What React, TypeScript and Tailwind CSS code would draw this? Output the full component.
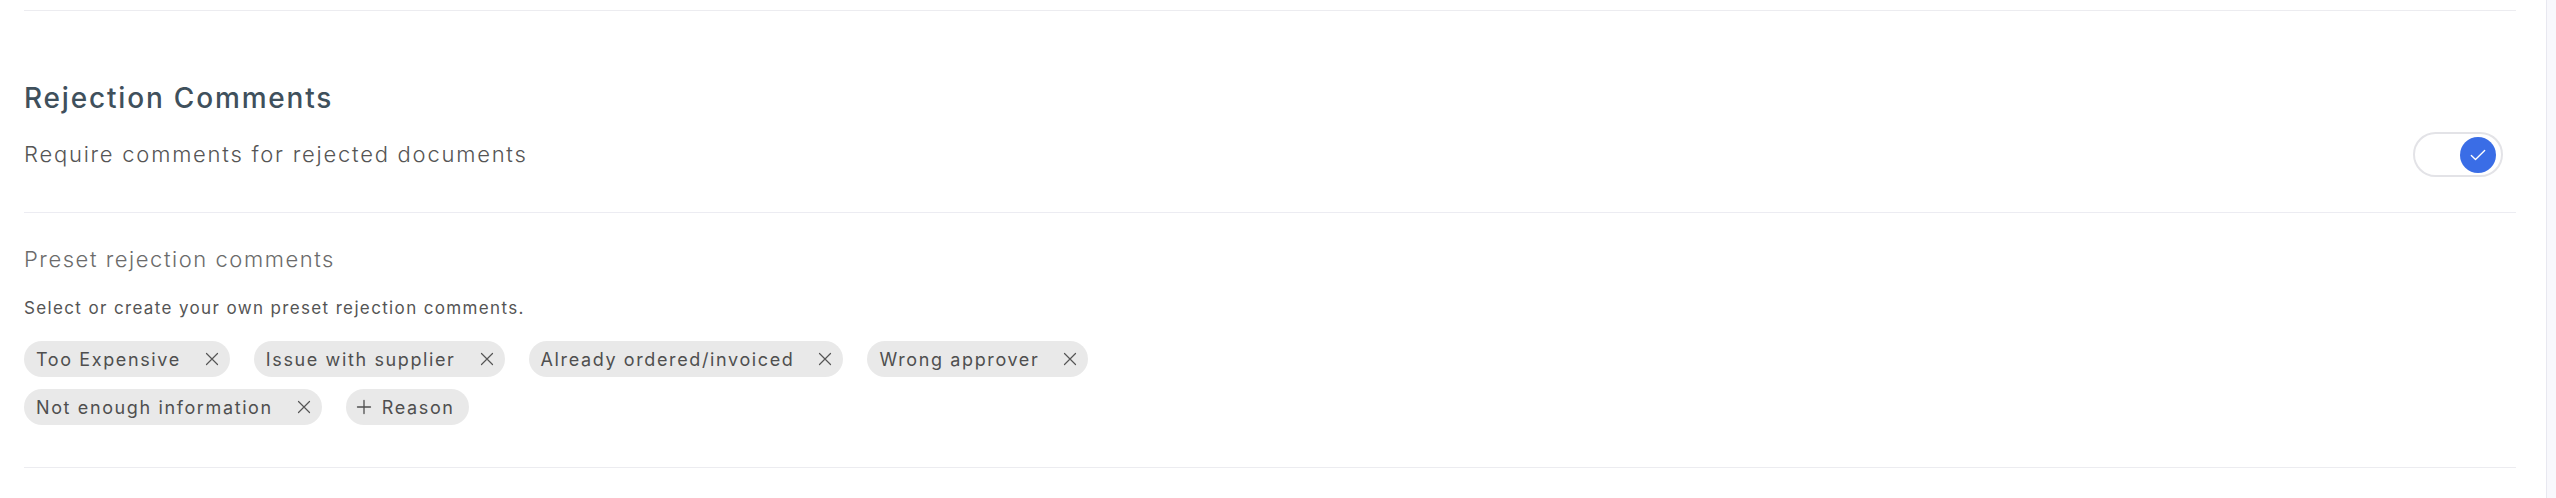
import { useState } from 'react'

const presetComments = [
  'Too Expensive',
  'Issue with supplier',
  'Already ordered/invoiced',
  'Wrong approver',
  'Not enough information',
]

function CloseIcon() {
  return (
    <svg className="w-[14px] h-[14px]" viewBox="0 0 14 14" fill="none" stroke="currentColor">
      <path strokeWidth={1.2} strokeLinecap="round" d="M1.5 1.5l11 11M12.5 1.5l-11 11" />
    </svg>
  )
}

export default function App() {
  const [requireComments, setRequireComments] = useState(true)
  const [comments, setComments] = useState(presetComments)

  return (
    <div className="flex w-full h-[498px] bg-white font-['Inter',sans-serif]">
      <div className="flex-1 pl-6 pr-[30px] pt-[10px]">
        <div className="border-t border-[#ececf0]" />

        {/* Rejection comments */}
        <h2 className="mt-[69px] text-[28px] leading-[36px] font-medium text-[#3f505c] tracking-[0.065em]">
          Rejection Comments
        </h2>
        <div className="mt-4 flex items-center justify-between pr-[13px]">
          <span className="text-[22px] font-light text-[#555] tracking-[0.08em]">
            Require comments for rejected documents
          </span>
          <button
            type="button"
            onClick={() => setRequireComments(v => !v)}
            className={`flex items-center w-[90px] h-[45px] rounded-full border-2 border-[#e3e3e7] bg-white px-[5px] ${
              requireComments ? 'justify-end' : 'justify-start'
            }`}
          >
            <span
              className={`flex items-center justify-center w-9 h-9 rounded-full ${
                requireComments ? 'bg-[#3a6de6]' : 'bg-[#d4d4d8]'
              }`}
            >
              {requireComments && (
                <svg className="w-5 h-5" viewBox="0 0 24 24" fill="none" stroke="white">
                  <path strokeWidth={1.6} strokeLinecap="round" strokeLinejoin="round" d="M4 12.5l5 5L20 6.5" />
                </svg>
              )}
            </span>
          </button>
        </div>

        <div className="mt-[35px] border-t border-[#ececf2]" />

        {/* Preset comments */}
        <h3 className="mt-[31px] text-[22px] leading-[30px] font-light text-[#6b6b6b] tracking-[0.07em]">
          Preset rejection comments
        </h3>
        <p className="mt-[23px] text-[17px] leading-[22px] text-[#555] tracking-[0.08em]">
          Select or create your own preset rejection comments.
        </p>
        <div className="mt-[22px] max-w-[1200px] flex flex-wrap gap-x-6 gap-y-3">
          {comments.map(c => (
            <span
              key={c}
              className="flex items-center h-9 pl-3 pr-[11px] rounded-full bg-[#e9e9e9] text-[18px] text-[#4f4f4f] tracking-[0.09em]"
            >
              {c}
              <button
                type="button"
                onClick={() => setComments(prev => prev.filter(p => p !== c))}
                className="ml-6 text-[#555]"
              >
                <CloseIcon />
              </button>
            </span>
          ))}
          <button
            type="button"
            className="flex items-center h-9 pl-[10px] pr-[14px] rounded-full bg-[#e9e9e9] text-[18px] text-[#4f4f4f] tracking-[0.09em]"
          >
            <svg className="w-4 h-4 mr-[10px]" viewBox="0 0 16 16" fill="none" stroke="currentColor">
              <path strokeWidth={1.3} strokeLinecap="round" d="M8 1.5v13M1.5 8h13" />
            </svg>
            Reason
          </button>
        </div>

        <div className="mt-[42px] border-t border-[#ececf0]" />
      </div>
      <div className="w-[10px] border-l border-[#e8e8f0] bg-[#f8f8fc]" />
    </div>
  )
}
